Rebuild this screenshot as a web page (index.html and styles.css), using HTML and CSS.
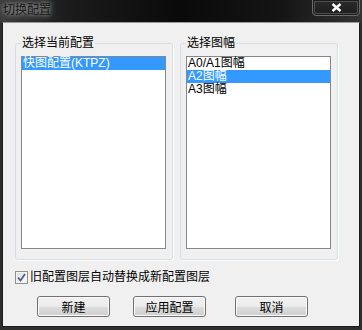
FILE: index.html
```html
<!DOCTYPE html>
<html lang="zh-CN">

<head>
    <meta charset="UTF-8">
    <title>切换配置</title>
    <link rel="stylesheet" href="styles.css">
</head>

<body>
    <div class="window">
        <div class="titlebar">
            <span class="title">切换配置</span>
            <button class="close">
                <svg width="11" height="9" viewBox="0 0 11 9">
                    <path d="M1.5 1 L9.5 8 M9.5 1 L1.5 8" stroke="#fff" stroke-width="2.4" fill="none" />
                </svg>
            </button>
        </div>
        <div class="content">
            <div class="groups">
                <fieldset class="group">
                    <legend>选择当前配置</legend>
                    <ul class="listbox">
                        <li class="selected">快图配置(KTPZ)</li>
                    </ul>
                </fieldset>
                <fieldset class="group">
                    <legend>选择图幅</legend>
                    <ul class="listbox">
                        <li>A0/A1图幅</li>
                        <li class="selected">A2图幅</li>
                        <li>A3图幅</li>
                    </ul>
                </fieldset>
            </div>
            <label class="check-row">
                <span class="checkbox">
                    <svg width="9" height="9" viewBox="0 0 9 9">
                        <path d="M1 4.5 L3.5 7.5 L8 1" stroke="#4a5f97" stroke-width="1.8" fill="none" />
                    </svg>
                </span>
                旧配置图层自动替换成新配置图层
            </label>
            <div class="buttons">
                <button class="btn">新建</button>
                <button class="btn btn-apply">应用配置</button>
                <button class="btn btn-cancel">取消</button>
            </div>
        </div>
    </div>
</body>

</html>
```

FILE: styles.css
```css
body {
    margin: 0;
    background-color: #000;
    font-family: "Liberation Sans", "Noto Sans CJK SC", sans-serif;
    font-size: 12px;
}

.window {
    width: 362px;
    height: 330px;
    box-sizing: border-box;
    display: flex;
    flex-direction: column;
    padding: 0 2px 3px 2px;
    background-color: #2e2e2e;
}

.titlebar {
    height: 22px;
    margin: 0 -2px;
    display: flex;
    align-items: flex-start;
    background: linear-gradient(90deg, #3e3e3e 0%, #1c1c1c 18%, #0a0a0a 50%, #151515 78%, #333 100%);
}

.title {
    padding: 3px 0 0 3px;
    line-height: 14px;
    color: #151515;
    text-shadow: 0 0 4px rgba(220, 220, 220, 0.8), 0 0 8px rgba(200, 200, 200, 0.5);
}

.close {
    margin: -1px 2px 0 auto;
    width: 48px;
    height: 17px;
    padding: 3px 0 0 0;
    display: flex;
    justify-content: center;
    align-items: flex-start;
    border: 1px solid #6c6c6c;
    border-radius: 0 0 4px 4px;
    background: linear-gradient(#2a2a2a, #1e1e1e);
    box-shadow: inset 0 0 0 1px #1a1a1a, inset 0 0 0 2px #505050;
}

.content {
    flex: 1;
    display: flex;
    flex-direction: column;
    padding: 13px 0 0 12px;
    background-color: #f0f0f0;
    border: 1px solid #1c1c1c;
    border-top-color: #9a9a9a;
}

.groups {
    display: flex;
    gap: 7px;
}

.group {
    margin: 0;
    width: 158px;
    box-sizing: border-box;
    padding: 0 6px 10px 5px;
    border: 1px solid #d5dfe5;
    border-radius: 3px;
    box-shadow: 1px 1px 0 #fff;
}

.group legend {
    padding: 0 1px;
    line-height: 14px;
    color: #000;
}

.listbox {
    list-style: none;
    margin: 6px 0 0 0;
    padding: 0;
    height: 193px;
    box-sizing: border-box;
    border: 1px solid #828790;
    background-color: #fff;
}

.listbox li {
    height: 13px;
    line-height: 13px;
    padding-left: 1px;
    white-space: nowrap;
}

.listbox .selected {
    background-color: #3399ff;
    color: #fff;
}

.check-row {
    margin-top: 11px;
    height: 13px;
    display: flex;
    align-items: center;
    gap: 2px;
    line-height: 13px;
}

.checkbox {
    width: 13px;
    height: 13px;
    box-sizing: border-box;
    display: flex;
    justify-content: center;
    align-items: center;
    border: 1px solid #8e8f8f;
    background: linear-gradient(135deg, #dcdcdc, #fefefe);
    box-shadow: inset 0 0 0 1px #f4f4f4;
}

.buttons {
    display: flex;
    margin-top: 12px;
    padding-left: 22px;
}

.btn {
    width: 73px;
    height: 21px;
    padding: 0;
    font-family: inherit;
    font-size: 12px;
    color: #000;
    border: 1px solid #707070;
    border-radius: 3px;
    background: linear-gradient(#f2f2f2 0%, #ebebeb 50%, #dddddd 50%, #cfcfcf 100%);
    box-shadow: inset 0 0 0 1px #fcfcfc;
}

.btn-apply {
    margin-left: 23px;
}

.btn-cancel {
    margin-left: 29px;
}
```
